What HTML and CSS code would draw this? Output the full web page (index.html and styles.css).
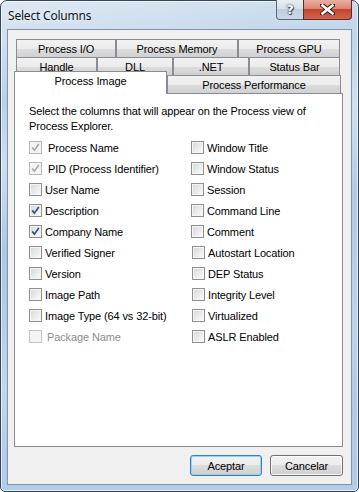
FILE: index.html
```html
<!DOCTYPE html>
<html>

<head>
    <meta charset="UTF-8">
    <title>Select Columns</title>
    <link rel="stylesheet" href="styles.css">
</head>

<body>
    <div class="window">
        <div class="titlebar">
            <span class="title">Select Columns</span>
            <div class="caption-buttons">
                <div class="cap-btn help">?</div>
                <div class="cap-btn close">
                    <svg width="15" height="11" viewBox="0 0 15 11">
                        <path d="M2 1 L13 10 M13 1 L2 10" stroke="#3a1a14" stroke-width="4.5" stroke-linecap="square" />
                        <path d="M2.5 1.5 L12.5 9.5 M12.5 1.5 L2.5 9.5" stroke="#ffffff" stroke-width="2.6" stroke-linecap="square" />
                    </svg>
                </div>
            </div>
        </div>

        <div class="client">
            <div class="tabs">
                <div class="tabrow">
                    <div class="tab" style="width: 100px">Process I/O</div>
                    <div class="tab" style="width: 122px">Process Memory</div>
                    <div class="tab" style="width: 102px">Process GPU</div>
                </div>
                <div class="tabrow">
                    <div class="tab" style="width: 81px">Handle</div>
                    <div class="tab" style="width: 76px">DLL</div>
                    <div class="tab" style="width: 76px">.NET</div>
                    <div class="tab" style="width: 91px">Status Bar</div>
                </div>
                <div class="tabrow last">
                    <div class="tab selected" style="width: 153px">Process Image</div>
                    <div class="tab" style="width: 174px">Process Performance</div>
                </div>
            </div>

            <div class="panel">
                <p class="intro">Select the columns that will appear on the Process view of Process Explorer.</p>
                <div class="columns">
                    <div class="col">
                        <label class="check locked"><span class="box on"></span>Process Name</label>
                        <label class="check locked"><span class="box on"></span>PID (Process Identifier)</label>
                        <label class="check"><span class="box"></span>User Name</label>
                        <label class="check"><span class="box on"></span>Description</label>
                        <label class="check"><span class="box on"></span>Company Name</label>
                        <label class="check"><span class="box"></span>Verified Signer</label>
                        <label class="check"><span class="box"></span>Version</label>
                        <label class="check"><span class="box"></span>Image Path</label>
                        <label class="check"><span class="box"></span>Image Type (64 vs 32-bit)</label>
                        <label class="check disabled"><span class="box"></span>Package Name</label>
                    </div>
                    <div class="col">
                        <label class="check"><span class="box"></span>Window Title</label>
                        <label class="check"><span class="box"></span>Window Status</label>
                        <label class="check"><span class="box"></span>Session</label>
                        <label class="check"><span class="box"></span>Command Line</label>
                        <label class="check"><span class="box"></span>Comment</label>
                        <label class="check shifted"><span class="box"></span>Autostart Location</label>
                        <label class="check shifted"><span class="box"></span>DEP Status</label>
                        <label class="check shifted"><span class="box"></span>Integrity Level</label>
                        <label class="check shifted"><span class="box"></span>Virtualized</label>
                        <label class="check shifted"><span class="box"></span>ASLR Enabled</label>
                    </div>
                </div>
            </div>

            <div class="buttons">
                <button class="default">Aceptar</button>
                <button>Cancelar</button>
            </div>
        </div>
    </div>
</body>

</html>
```

FILE: styles.css
```css
body {
    margin: 0;
    width: 359px;
    height: 492px;
    overflow: hidden;
    background-color: #ffffff;
    font-family: "Liberation Sans", Arial, sans-serif;
    font-size: 11px;
    letter-spacing: -0.12px;
    color: #000000;
}

.window {
    box-sizing: border-box;
    width: 359px;
    height: 492px;
    display: flex;
    flex-direction: column;
    padding: 0 6px 6px 6px;
    border: 1px solid #34465a;
    border-radius: 7px 7px 5px 5px;
    background:
        linear-gradient(170deg, rgba(255, 255, 255, 0.45) 0%, rgba(255, 255, 255, 0) 18%, rgba(255, 255, 255, 0.35) 30%, rgba(255, 255, 255, 0) 45%, rgba(255, 255, 255, 0.25) 70%, rgba(255, 255, 255, 0) 85%),
        linear-gradient(to bottom, #c3d6ea, #a9c5e4 60%, #b3cce7);
    box-shadow: inset 0 0 0 1px rgba(255, 255, 255, 0.6);
}

.titlebar {
    height: 28px;
    display: flex;
    justify-content: space-between;
    align-items: flex-start;
}

.title {
    margin-top: 6px;
    margin-left: 1px;
    font-family: "Noto Sans", "Open Sans", sans-serif;
    font-size: 12px;
    letter-spacing: -0.2px;
    color: #101820;
    text-shadow: 0 0 6px rgba(255, 255, 255, 0.9);
}

.caption-buttons {
    display: flex;
    margin-top: -1px;
}

.cap-btn {
    box-sizing: border-box;
    height: 20px;
    display: flex;
    justify-content: center;
    align-items: center;
    border: 1px solid #5a6878;
    border-top: none;
}

.cap-btn.help {
    width: 27px;
    border-right: none;
    border-radius: 0 0 0 4px;
    background: linear-gradient(to bottom, #e6edf5, #d4dfeb 50%, #bfcfe0 50%, #cbd8e6);
    font-family: "DejaVu Sans", sans-serif;
    font-weight: bold;
    font-size: 13px;
    color: #ffffff;
    text-shadow: 0 0 1px #334, 0 0 2px #334, 1px 1px 0 #556;
}

.cap-btn.close {
    width: 49px;
    border-radius: 0 0 4px 0;
    background: linear-gradient(to bottom, #eab0a4, #d9806f 50%, #c5462f 50%, #d0654e);
    border-color: #5c2a22;
}

.client {
    flex: 1;
    display: flex;
    flex-direction: column;
    border: 1px solid #7f93a8;
    background-color: #f0f0f0;
    padding: 9px 8px 8px 6px;
}

.tabs {
    display: flex;
    flex-direction: column;
}

.tabrow {
    display: flex;
    height: 18px;
    padding-left: 2px;
}

.tabrow.last {
    height: 19px;
    padding-left: 0;
    align-items: flex-end;
    margin-bottom: -1px;
}

.tab {
    box-sizing: border-box;
    height: 19px;
    display: flex;
    justify-content: center;
    align-items: center;
    border: 1px solid #898c95;
    border-bottom: none;
    background: linear-gradient(to bottom, #f2f2f2, #ebebeb 50%, #dddddd 50%, #cfcfcf);
    color: #000000;
    padding-bottom: 1px;
}

.tab.selected {
    position: relative;
    z-index: 1;
    height: 23px;
    background: #ffffff;
    align-items: flex-start;
    padding-top: 3px;
}

.panel {
    flex: 1;
    border: 1px solid #898c95;
    background-color: #ffffff;
    padding: 10px 14px 0 14px;
}

.intro {
    margin: 0 0 3px 0;
    line-height: 15px;
    width: 290px;
}

.columns {
    display: grid;
    grid-template-columns: 162px 1fr;
}

.col {
    display: flex;
    flex-direction: column;
}

.check {
    height: 21px;
    display: flex;
    align-items: center;
    gap: 3px;
}

.check.locked {
    gap: 6px;
}

.check.shifted {
    padding-left: 1px;
}

.check.disabled {
    color: #8d8d8d;
    gap: 5px;
}

.box {
    box-sizing: border-box;
    width: 13px;
    height: 13px;
    flex: none;
    border: 1px solid #8e8f8f;
    box-shadow: inset 0 0 0 1px #f4f4f4;
    background: linear-gradient(135deg, #d6d6d6, #f5f5f5 80%, #ffffff);
}

.box.on {
    background:
        url("data:image/svg+xml,%3Csvg xmlns='http://www.w3.org/2000/svg' width='11' height='11'%3E%3Cpath d='M2.2 5.4 L4.4 8.2 L8.8 2' fill='none' stroke='%233b4c8a' stroke-width='1.7'/%3E%3C/svg%3E") center / 11px 11px no-repeat,
        linear-gradient(135deg, #d6d6d6, #f5f5f5 80%, #ffffff);
}

.locked .box {
    border-color: #b8b8b8;
    background: #f4f4f4;
}

.locked .box.on {
    background:
        url("data:image/svg+xml,%3Csvg xmlns='http://www.w3.org/2000/svg' width='11' height='11'%3E%3Cpath d='M2.2 5.4 L4.4 8.2 L8.8 2' fill='none' stroke='%23a8a8a8' stroke-width='1.6'/%3E%3C/svg%3E") center / 11px 11px no-repeat,
        #f4f4f4;
}

.disabled .box {
    border-color: #c4c4c4;
    background: #f4f4f4;
}

.buttons {
    display: flex;
    justify-content: flex-end;
    gap: 8px;
    margin-top: 8px;
}

.buttons button {
    box-sizing: border-box;
    width: 73px;
    height: 21px;
    border: 1px solid #707070;
    border-radius: 3px;
    background: linear-gradient(to bottom, #f2f2f2, #ebebeb 50%, #dddddd 50%, #cfcfcf);
    box-shadow: inset 0 0 0 1px rgba(255, 255, 255, 0.8);
    font-family: "Liberation Sans", Arial, sans-serif;
    font-size: 11px;
    letter-spacing: -0.12px;
    color: #000000;
    padding: 0;
}

.buttons button.default {
    width: 72px;
    border-color: #3c7fb1;
    box-shadow: inset 0 0 0 1px #8fd3f5;
}
```
